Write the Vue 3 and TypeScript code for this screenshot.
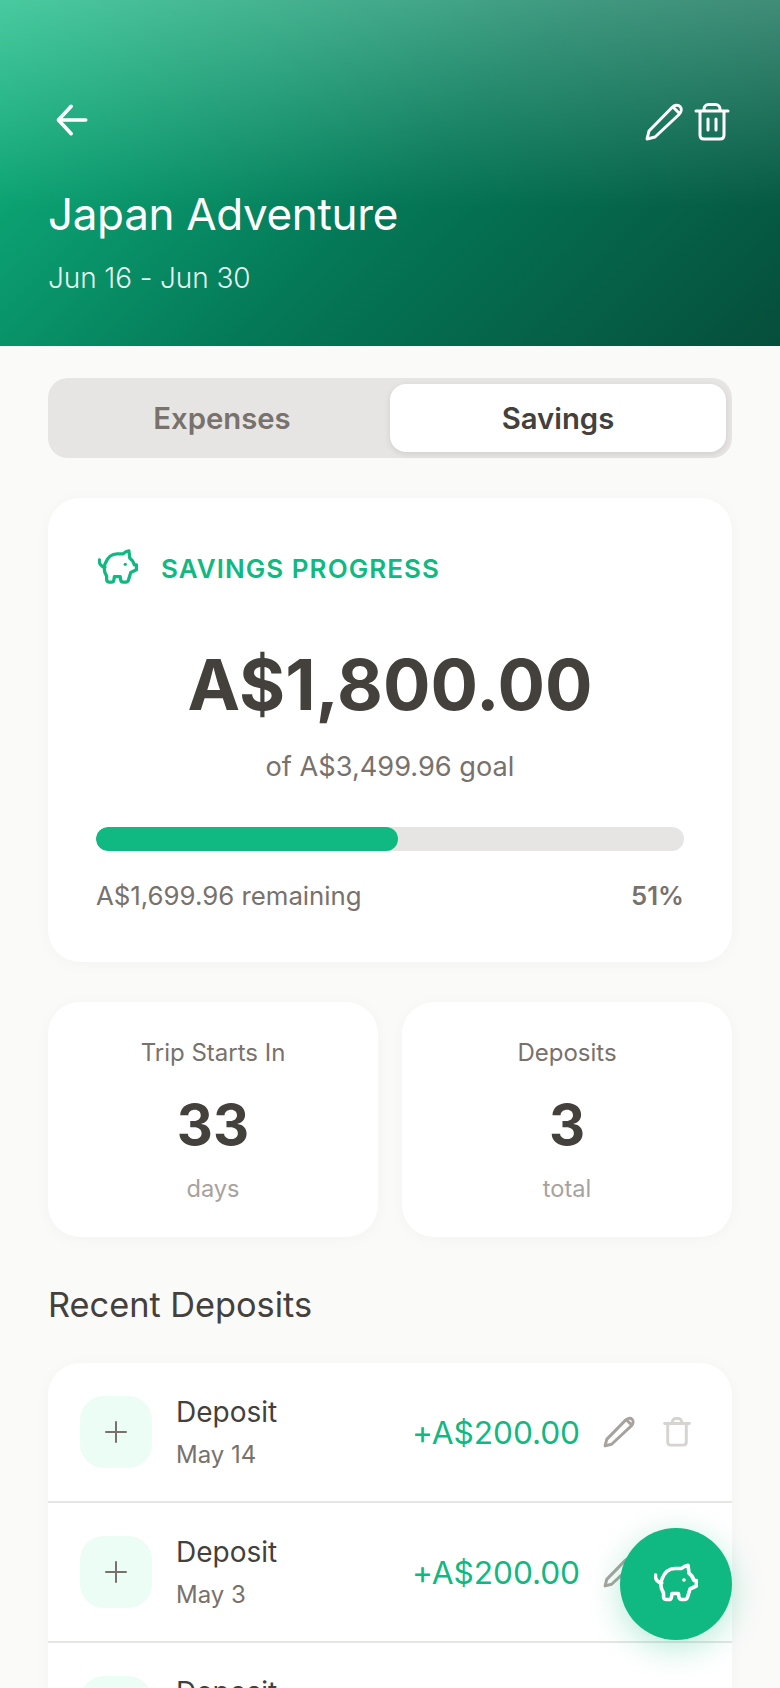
<script setup lang="ts">
const pig =
  'M9.5 31C6.500 26 6 21.500 8 17 10.500 10.500 15 6.500 21 6.500h6.500c1.800-1.700 4-3 6.500-3.300l1 8c2.500 1.800 4.200 4.300 5 7.300h2.300V24l-6.300 3-2.500 8.300c-.4 1.300-1.300 2.200-2.700 2.200h-3.200c-1.400 0-2.300-.8-2.600-2.100l-.6-3.900h-6.400l-.6 3.900c-.2 1.300-1.100 2.100-2.500 2.100h-2.600c-1.400 0-2.300-.7-2.700-2ZM1.500 13c-.6 4 2 7.500 6.200 8'
const pencil = 'M5 39l2-8L30 7.500c2.500-2.500 6-3 8-1s1.500 5.500-1 8L13 37ZM31 7l6 6'
const trashBody =
  'M6 11h32M10 11v24c0 2.500 1.500 4 4 4h16c2.500 0 4-1.500 4-4V11M14 11V9c0-2.500 2-4.500 4.500-4.500h7c2.500 0 4.500 2 4.500 4.500v2'
const trash = `${trashBody}M18 19v11M26 19v11`
const trashSmall =
  'M6 11h32M10 11v24c0 2.500 1.500 4 4 4h16c2.500 0 4-1.500 4-4V11M16 11V9c0-2.500 2-4.500 4.500-4.500h3c2.500 0 4.500 2 4.500 4.500v2'

const deposits = [
  { id: 1, date: 'May 14' },
  { id: 2, date: 'May 3' },
  { id: 3, date: 'Apr 20' },
]
</script>

<template>
  <div class="page">
    <header class="hero">
      <div class="hero-actions">
        <svg class="back" viewBox="0 0 44 44" fill="none" stroke="currentColor" stroke-width="4" stroke-linecap="round" stroke-linejoin="round">
          <path d="M36 22H7M20 7 6 22l14 15" />
        </svg>
        <div class="hero-tools">
          <svg viewBox="0 0 44 44" class="tool" fill="none" stroke="currentColor" stroke-width="3" stroke-linecap="round" stroke-linejoin="round"><path :d="pencil" /></svg>
          <svg viewBox="0 0 44 44" class="tool" fill="none" stroke="currentColor" stroke-width="3" stroke-linecap="round" stroke-linejoin="round"><path :d="trash" /></svg>
        </div>
      </div>
      <h1>Japan Adventure</h1>
      <p>Jun 16 - Jun 30</p>
    </header>

    <main class="content">
      <div class="tabs">
        <div class="tab">Expenses</div>
        <div class="tab active">Savings</div>
      </div>

      <section class="card progress">
        <div class="progress-title">
          <svg viewBox="0 0 44 44" class="pig" fill="none" stroke="currentColor" stroke-width="3.600" stroke-linecap="round" stroke-linejoin="round">
            <path :d="pig" /><circle cx="30" cy="18" r="1.800" fill="currentColor" stroke="none" />
          </svg>
          <span>SAVINGS PROGRESS</span>
        </div>
        <div class="amount">A$1,800.00</div>
        <div class="goal">of A$3,499.96 goal</div>
        <div class="bar"><div class="bar-fill" :style="{ width: '51.4%' }"></div></div>
        <div class="bar-legend">
          <span>A$1,699.96 remaining</span>
          <strong>51%</strong>
        </div>
      </section>

      <div class="stats">
        <section class="card stat">
          <div class="stat-label">Trip Starts In</div>
          <div class="stat-value">33</div>
          <div class="stat-unit">days</div>
        </section>
        <section class="card stat">
          <div class="stat-label">Deposits</div>
          <div class="stat-value">3</div>
          <div class="stat-unit">total</div>
        </section>
      </div>

      <h2>Recent Deposits</h2>

      <section class="card list">
        <div v-for="d in deposits" :key="d.id" class="row">
          <div class="row-icon">
            <svg viewBox="0 0 24 24" fill="none" stroke="currentColor" stroke-width="2" stroke-linecap="round"><path d="M12 2v20M2 12h20" /></svg>
          </div>
          <div class="row-text">
            <div class="row-title">Deposit</div>
            <div class="row-date">{{ d.date }}</div>
          </div>
          <div class="row-amount">+A$200.00</div>
          <svg viewBox="0 0 44 44" class="edit" fill="none" stroke="currentColor" stroke-width="3.600" stroke-linecap="round" stroke-linejoin="round"><path :d="pencil" /></svg>
          <svg viewBox="0 0 44 44" class="del" fill="none" stroke="currentColor" stroke-width="3.800" stroke-linecap="round" stroke-linejoin="round"><path :d="trashSmall" /></svg>
        </div>
      </section>
    </main>

    <button class="fab" type="button" aria-label="Add deposit">
      <svg viewBox="0 0 44 44" fill="none" stroke="currentColor" stroke-width="3.600" stroke-linecap="round" stroke-linejoin="round">
        <path :d="pig" /><circle cx="30" cy="18" r="1.800" fill="currentColor" stroke="none" />
      </svg>
    </button>
  </div>
</template>

<style>
html,
body {
  margin: 0;
  background: #fafaf9;
}
</style>

<style scoped>
.page {
  position: relative;
  width: 780px;
  height: 1688px;
  overflow: hidden;
  background: #fafaf9;
  font-family: Inter, 'Liberation Sans', sans-serif;
  color: #44403c;
}
.hero {
  box-sizing: border-box;
  height: 346px;
  padding: 96px 48px 0;
  color: #fff;
  background:
    linear-gradient(180deg, rgba(255, 255, 255, 0.24), rgba(255, 255, 255, 0) 60%),
    linear-gradient(135deg, #10b981 0%, #047857 52%, #064e3b 100%);
}
.hero-actions {
  display: flex;
  justify-content: space-between;
  align-items: center;
  height: 48px;
}
.back {
  width: 40px;
  height: 40px;
  margin-left: 5px;
}
.hero-tools {
  display: flex;
  gap: 4px;
  margin-top: 4px;
  margin-right: -2px;
}
.tool {
  width: 44px;
  height: 44px;
}
h1 {
  margin: 44px 0 0;
  font-size: 44px;
  line-height: 52px;
  font-weight: 400;
  letter-spacing: -0.35px;
}
.hero p {
  margin: 21px 0 0;
  font-size: 28px;
  line-height: 34px;
  opacity: 0.9;
  font-weight: 300;
  letter-spacing: -0.1px;
}
.content {
  padding: 32px 48px 0;
}
.tabs {
  display: flex;
  box-sizing: border-box;
  height: 80px;
  padding: 6px;
  border-radius: 20px;
  background: #e7e5e4;
}
.tab {
  flex: 1;
  display: flex;
  align-items: center;
  justify-content: center;
  font-size: 29.3px;
  font-weight: 600;
  color: #78716c;
  border-radius: 16px;
}
.tab.active {
  background: #fff;
  color: #44403c;
  box-shadow: 0 2px 6px rgba(0, 0, 0, 0.1);
}
.card {
  background: #fff;
  border-radius: 32px;
  box-shadow: 0 2px 16px rgba(0, 0, 0, 0.03);
}
.progress {
  box-sizing: border-box;
  height: 464px;
  margin-top: 40px;
  padding: 48px;
}
.progress-title {
  display: flex;
  align-items: center;
  height: 44px;
  color: #10b981;
  font-size: 26px;
  font-weight: 600;
  letter-spacing: 1.05px;
}
.progress-title span {
  margin-left: 23px;
}
.pig {
  width: 40px;
  height: 40px;
  margin-left: 2px;
}
.amount {
  margin-top: 47px;
  text-align: center;
  font-size: 70.5px;
  line-height: 96px;
  font-weight: 700;
}
.goal {
  margin-top: 16px;
  text-align: center;
  font-size: 27.2px;
  line-height: 36px;
  color: #78716c;
}
.bar {
  height: 24px;
  margin-top: 42px;
  border-radius: 12px;
  background: #e7e5e4;
  overflow: hidden;
}
.bar-fill {
  height: 100%;
  border-radius: 12px;
  background: #10b981;
}
.bar-legend {
  display: flex;
  justify-content: space-between;
  margin-top: 27px;
  font-size: 25.8px;
  line-height: 36px;
  color: #78716c;
}
.bar-legend strong {
  font-weight: 600;
}
.stats {
  display: grid;
  grid-template-columns: 1fr 1fr;
  gap: 24px;
  margin-top: 40px;
}
.stat {
  box-sizing: border-box;
  height: 235px;
  padding-top: 35px;
  text-align: center;
}
.stat-label {
  font-size: 24px;
  line-height: 32px;
  color: #78716c;
}
.stat-value {
  margin-top: 20px;
  font-size: 56px;
  line-height: 72px;
  font-weight: 700;
}
.stat-unit {
  margin-top: 12px;
  font-size: 23.6px;
  line-height: 32px;
  color: #a8a29e;
}
h2 {
  margin: 46px 0 0;
  font-size: 34.3px;
  line-height: 44px;
  font-weight: 400;
}
.list {
  margin-top: 36px;
  overflow: hidden;
}
.row {
  display: flex;
  align-items: center;
  box-sizing: border-box;
  height: 140px;
  padding: 0 38px 0 32px;
  border-bottom: 2px solid #e7e5e4;
}
.row-icon {
  display: flex;
  align-items: center;
  justify-content: center;
  width: 72px;
  height: 72px;
  border-radius: 24px;
  background: #ecfdf5;
  color: #78716c;
}
.row-icon svg {
  width: 24px;
  height: 24px;
}
.row-text {
  flex: 1;
  margin-left: 24px;
}
.row-title {
  font-size: 28px;
  line-height: 36px;
}
.row-date {
  margin-top: 9px;
  font-size: 24px;
  line-height: 32px;
  color: #78716c;
}
.row-amount {
  font-size: 31.7px;
  letter-spacing: -0.1px;
  color: #10b981;
}
.edit {
  width: 36px;
  height: 36px;
  margin-left: 21px;
  color: #a8a29e;
}
.del {
  width: 34px;
  height: 34px;
  margin-left: 23px;
  color: #d6d3d1;
}
.fab {
  position: absolute;
  left: 620px;
  top: 1528px;
  width: 112px;
  height: 112px;
  padding: 0;
  display: flex;
  align-items: center;
  justify-content: center;
  border: none;
  border-radius: 50%;
  color: #fff;
  background: #10b981;
  box-shadow: 0 8px 32px rgba(16, 185, 129, 0.3);
}
.fab svg {
  width: 44px;
  height: 44px;
}
</style>
